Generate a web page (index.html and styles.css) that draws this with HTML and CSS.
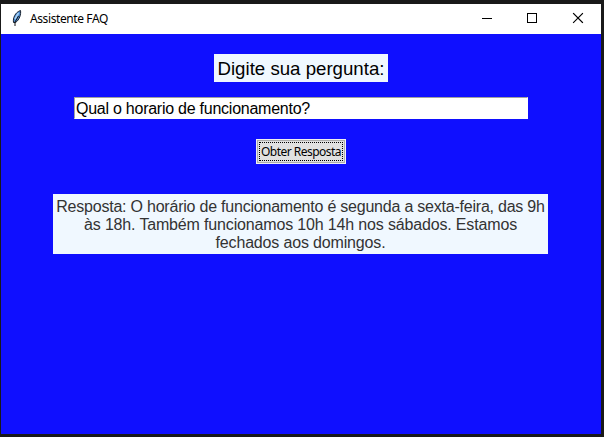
FILE: index.html
```html
<!DOCTYPE html>
<html lang="pt-BR">
<head>
<meta charset="utf-8">
<title>Assistente FAQ</title>
<link rel="stylesheet" href="styles.css">
</head>
<body>
<div class="window">
  <header class="titlebar">
    <svg class="feather" width="12" height="18" viewBox="0 0 12 18">
      <path d="M2.500 13.500C1.800 9 4 3.500 9.500 1.500C10.200 5 8.500 11 4.500 13.500Z" fill="#4f8fd6" stroke="#17202c" stroke-width="1"/>
      <path d="M4 10L7.500 4" fill="none" stroke="#a9d2f5" stroke-width="1.500"/>
      <path d="M4 17V13L7.500 7" fill="none" stroke="#111" stroke-width="1"/>
    </svg>
    <span class="title">Assistente FAQ</span>
    <div class="controls">
      <svg width="46" height="30" viewBox="0 0 46 30" shape-rendering="crispEdges"><path d="M18 14.500H28" stroke="#000"/></svg>
      <svg width="46" height="30" viewBox="0 0 46 30" shape-rendering="crispEdges"><path d="M17.500 9.500H26.500V18.500H17.500Z" fill="none" stroke="#000"/></svg>
      <svg width="46" height="30" viewBox="0 0 46 30"><path d="M17.500 9.500L26.500 18.500M26.500 9.500L17.500 18.500" stroke="#000" stroke-width="1.100" stroke-linecap="square"/></svg>
    </div>
  </header>
  <main class="content">
    <label class="prompt" for="question">Digite sua pergunta:</label>
    <input class="question" id="question" type="text" value="Qual o horario de funcionamento?">
    <button class="submit" type="button"><span class="focus">Obter Resposta</span></button>
    <p class="answer"><span class="first-line">Resposta: O horário de funcionamento é segunda a sexta-feira, das 9h</span><br>às 18h. Também funcionamos 10h 14h nos sábados. Estamos<br>fechados aos domingos.</p>
  </main>
</div>
</body>
</html>
```
FILE: styles.css
```css
* { box-sizing: border-box; }
body {
  margin: 0;
  height: 437px;
  padding: 4px 3px 3px 1px;
  overflow: hidden;
  background: #191919;
  font-family: "Liberation Sans", Arial, sans-serif;
}
.window {
  height: 430px;
  display: flex;
  flex-direction: column;
  background: #0f0fff;
}
.titlebar {
  height: 30px;
  flex: none;
  display: flex;
  align-items: center;
  padding-left: 10px;
  background: #fff;
}
.feather { flex: none; margin-top: -2px; }
.title {
  margin-left: 7px;
  font: 12px/16px "Noto Sans", sans-serif;
  letter-spacing: -0.4px;
  color: #000;
}
.controls { display: flex; margin-left: auto; margin-right: -1px; }
.content {
  flex: 1;
  display: flex;
  flex-direction: column;
  align-items: center;
  padding-top: 20px;
}
.prompt {
  width: 174px;
  height: 28px;
  background: #f0f8ff;
  font-size: 18.67px;
  line-height: 29px;
  text-align: center;
  white-space: nowrap;
  color: #000;
}
.question {
  width: 454px;
  height: 22px;
  margin: 15px 0 0;
  padding: 1px 1px 0;
  border: 1px solid #fff;
  border-top-color: #a0a0a0;
  border-left-color: #a0a0a0;
  border-radius: 0;
  outline: 0;
  background: #fff;
  font: 16px/19px "Liberation Sans", Arial, sans-serif;
  letter-spacing: -0.25px;
  color: #000;
}
.submit {
  width: 90px;
  height: 25px;
  margin: 20px 0 0;
  padding: 1px;
  border: 1px solid #f0f0f0;
  border-radius: 0;
  box-shadow: inset 0 0 0 1px #adadad;
  background: #e1e1e1;
  color: #000;
}
.focus {
  display: block;
  height: 19px;
  margin: 0 1px;
  border: 1px dotted #000;
  font: 12px/17px "Noto Sans", sans-serif;
  letter-spacing: -0.52px;
  text-align: center;
  white-space: nowrap;
}
.answer {
  width: 495px;
  height: 60px;
  margin: 30px 1px 0 0;
  padding: 4px 0 2px;
  background: #f0f8ff;
  font-size: 16px;
  line-height: 18px;
  letter-spacing: -0.16px;
  text-align: center;
  white-space: nowrap;
  color: #333;
}
.first-line { letter-spacing: -0.22px; }
```
